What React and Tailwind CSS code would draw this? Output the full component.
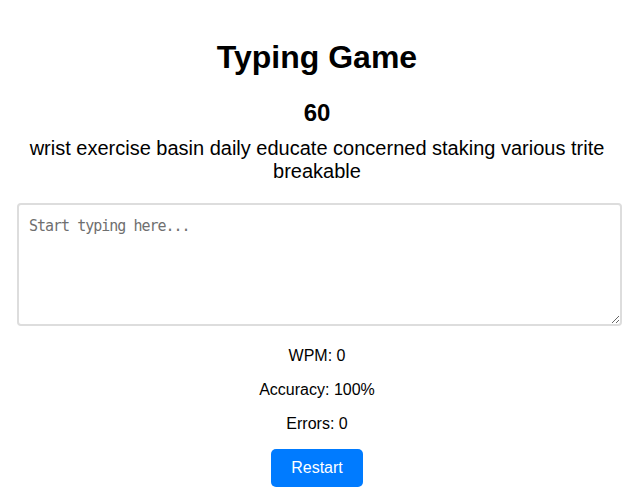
export default function App() {
  return (
    <div className="bg-white min-h-[504px] font-['Liberation_Sans',Arial,sans-serif] text-black">
      <div className="ml-[17px] w-[600px] text-center pt-[39px]">
        <h1 className="text-[32px] font-bold leading-[37px]">Typing Game</h1>
        <h2 className="mt-[23px] text-[24px] font-bold leading-[28px]">60</h2>
        <p className="mt-[10px] text-[20px] leading-[23px]">
          wrist exercise basin daily educate concerned staking various trite breakable
        </p>
        <textarea
          placeholder="Start typing here..."
          className="mt-[20px] block w-[605px] h-[123px] border-2 border-[#dddddd] rounded-[4px] p-[10px] text-[15px] tracking-[-1px] leading-[23px] font-['DejaVu_Sans_Mono',monospace] placeholder:text-[#6f6f6f] outline-none resize-y"
        />
        <div className="mt-[21px] text-[16px] leading-[18px]">
          <p>WPM: 0</p>
          <p className="mt-[16px]">Accuracy: 100%</p>
          <p className="mt-[16px]">Errors: 0</p>
        </div>
        <button className="mt-[16px] h-[38px] px-[20px] bg-[#007bff] text-white text-[16px] rounded-[5px]">
          Restart
        </button>
      </div>
    </div>
  );
}
